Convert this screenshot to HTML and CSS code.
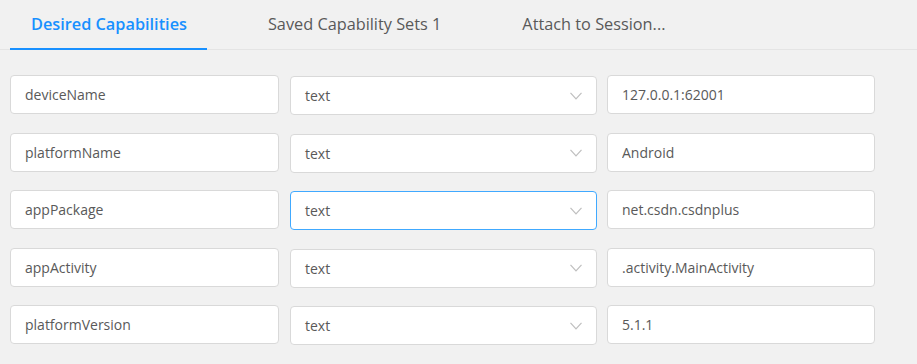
FILE: index.html
```html
<!DOCTYPE html>
<html lang="en">
<head>
  <meta charset="UTF-8">
  <title>Desired Capabilities</title>
  <link rel="stylesheet" href="styles.css">
</head>
<body>
  <div class="tabs">
    <div class="tab active">Desired Capabilities</div>
    <div class="tab">Saved Capability Sets 1</div>
    <div class="tab">Attach to Session...</div>
  </div>

  <div class="caps">
    <div class="cap-row">
      <input class="field" type="text" value="deviceName">
      <div class="select"><span>text</span><svg class="arrow" viewBox="0 0 12 8"><path d="M0.5 0.8 L6 6.8 L11.5 0.8"/></svg></div>
      <input class="field" type="text" value="127.0.0.1:62001">
    </div>
    <div class="cap-row">
      <input class="field" type="text" value="platformName">
      <div class="select"><span>text</span><svg class="arrow" viewBox="0 0 12 8"><path d="M0.5 0.8 L6 6.8 L11.5 0.8"/></svg></div>
      <input class="field" type="text" value="Android">
    </div>
    <div class="cap-row">
      <input class="field" type="text" value="appPackage">
      <div class="select focused"><span>text</span><svg class="arrow" viewBox="0 0 12 8"><path d="M0.5 0.8 L6 6.8 L11.5 0.8"/></svg></div>
      <input class="field" type="text" value="net.csdn.csdnplus">
    </div>
    <div class="cap-row">
      <input class="field" type="text" value="appActivity">
      <div class="select"><span>text</span><svg class="arrow" viewBox="0 0 12 8"><path d="M0.5 0.8 L6 6.8 L11.5 0.8"/></svg></div>
      <input class="field" type="text" value=".activity.MainActivity">
    </div>
    <div class="cap-row">
      <input class="field" type="text" value="platformVersion">
      <div class="select"><span>text</span><svg class="arrow" viewBox="0 0 12 8"><path d="M0.5 0.8 L6 6.8 L11.5 0.8"/></svg></div>
      <input class="field" type="text" value="5.1.1">
    </div>
  </div>
</body>
</html>
```

FILE: styles.css
```css
body { margin:0; background:#f1f1f1; font-family:"Open Sans", "Noto Sans", sans-serif; color:#595959; }

/* Tabs */
.tabs { display:flex; gap:40px; padding-left:10px; height:49px; border-bottom:1px solid #e4e4e4; }
.tab { padding:0 20px 0 21px; font-size:16.3px; line-height:48px; color:#595959; }
.tab.active { color:#1890ff; font-weight:600; border-bottom:2px solid #1890ff; margin-bottom:-1px; }

/* Rows */
.caps { padding:25px 0 0 10px; display:flex; flex-direction:column; gap:17.5px; }
.cap-row { display:flex; gap:11px; align-items:flex-start; height:40px; }

.field { box-sizing:border-box; height:39px; margin:0; padding:0 14px; border:1px solid #d9d9d9; border-radius:4px; background:#fff; font-family:inherit; font-size:14px; color:#595959; outline:none; }
.field:first-child { width:269px; }
.field:last-child { width:268px; margin-left:-1px; }

.select { box-sizing:border-box; width:307px; height:39px; margin-top:1px; padding:0 14px; display:flex; align-items:center; justify-content:space-between; border:1px solid #d9d9d9; border-radius:4px; background:#fff; font-size:14px; }
.select.focused { border-color:#40a9ff; }
.arrow { width:12px; height:8px; fill:none; stroke:#bfbfbf; stroke-width:1.2; }
```
